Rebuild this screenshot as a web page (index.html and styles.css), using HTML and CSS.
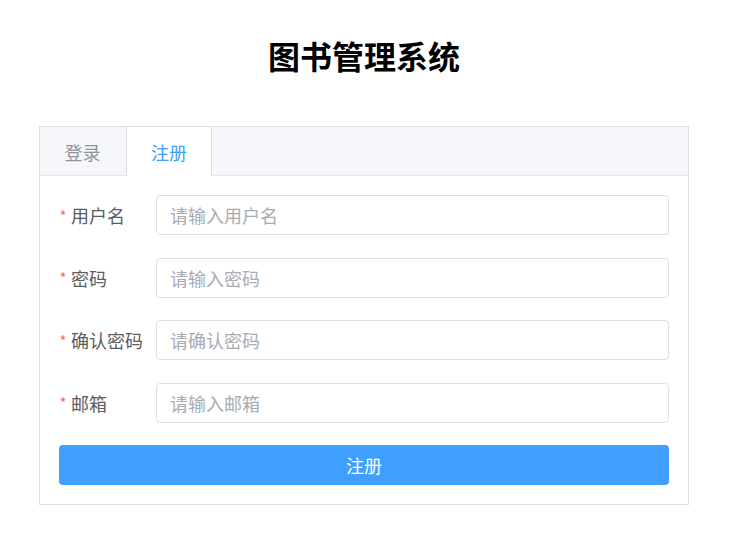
FILE: index.html
```html
<!DOCTYPE html>
<html lang="zh-CN">
<head>
<meta charset="utf-8">
<title>图书管理系统</title>
<link rel="stylesheet" href="styles.css">
</head>
<body>
<div class="page">
  <h1 class="title">图书管理系统</h1>
  <div class="card">
    <div class="tabs">
      <div class="tab">登录</div>
      <div class="tab active">注册</div>
    </div>
    <form class="form">
      <div class="row">
        <label class="label"><span class="req">*</span>用户名</label>
        <input class="input" type="text" placeholder="请输入用户名">
      </div>
      <div class="row">
        <label class="label"><span class="req">*</span>密码</label>
        <input class="input" type="password" placeholder="请输入密码">
      </div>
      <div class="row">
        <label class="label"><span class="req">*</span>确认密码</label>
        <input class="input" type="password" placeholder="请确认密码">
      </div>
      <div class="row">
        <label class="label"><span class="req">*</span>邮箱</label>
        <input class="input" type="text" placeholder="请输入邮箱">
      </div>
      <button class="btn" type="button">注册</button>
    </form>
  </div>
</div>
</body>
</html>
```
FILE: styles.css
```css
* { box-sizing: border-box; }
body {
  margin: 0;
  background: #fff;
  font-family: "Noto Sans CJK SC", "Noto Sans", sans-serif;
}
.page {
  width: 728px;
  padding-top: 32px;
}
.title {
  margin: 0 0 48px;
  text-align: center;
  font-size: 32px;
  line-height: 46px;
  font-weight: 700;
  color: #000;
}
.card {
  width: 650px;
  margin: 0 auto;
  border: 1px solid #dcdfe6;
  background: #fff;
}
.tabs {
  display: flex;
  height: 49px;
  background: #f5f7fa;
  border-bottom: 1px solid #e4e7ed;
}
.tab {
  width: 86px;
  height: 49px;
  display: flex;
  align-items: center;
  justify-content: center;
  font-size: 18px;
  color: #909399;
  border-right: 1px solid transparent;
}
.tab.active {
  background: #fff;
  color: #409eff;
  border-left: 1px solid #dcdfe6;
  border-right: 1px solid #dcdfe6;
  height: 49px;
  margin-bottom: -1px;
}
.form {
  padding: 19px 19px 19px;
  display: flex;
  flex-direction: column;
  gap: 22.5px;
}
.row {
  display: flex;
  align-items: center;
  height: 40px;
}
.label {
  width: 97px;
  font-size: 18px;
  color: #5a5c61;
  display: flex;
  align-items: center;
}
.req {
  color: #f56c6c;
  font-size: 15px;
  margin-right: 4px;
  width: 8px;
  text-align: center;
}
.input {
  flex: 1;
  height: 40px;
  border: 1px solid #dcdfe6;
  border-radius: 4px;
  padding: 0 13px;
  font-family: inherit;
  font-size: 18px;
  color: #606266;
  outline: none;
}
.input::placeholder { color: #a8abb2; }
.btn {
  height: 40px;
  border: none;
  border-radius: 4px;
  background: #409eff;
  color: #fff;
  font-family: inherit;
  font-size: 18px;
}
```
